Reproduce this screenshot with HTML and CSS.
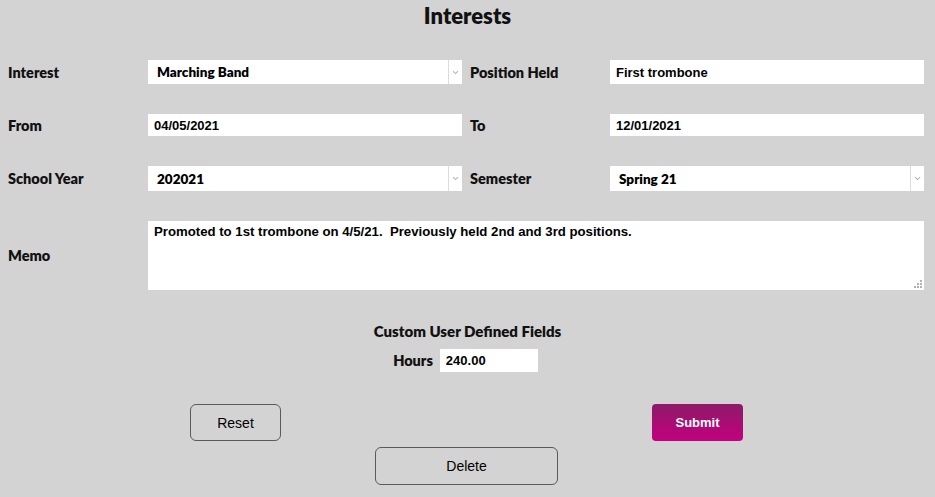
FILE: index.html
```html
<!DOCTYPE html>
<html>
<head>
<meta charset="utf-8">
<link rel="stylesheet" href="styles.css">
</head>
<body>
<h1 class="title">Interests</h1>
<div class="form">
  <label class="lbl">Interest</label>
  <div class="select"><span class="sel-val">Marching Band</span><span class="sel-arrow"><svg width="7" height="5" viewBox="0 0 7 5"><path d="M1 1.2 L3.5 3.6 L6 1.2" fill="none" stroke="#b4b4b4" stroke-width="1.1"/></svg></span></div>
  <label class="lbl lbl-r">Position Held</label>
  <input class="inp" type="text" value="First trombone">

  <label class="lbl">From</label>
  <input class="inp" type="text" value="04/05/2021">
  <label class="lbl lbl-r">To</label>
  <input class="inp" type="text" value="12/01/2021">

  <label class="lbl">School Year</label>
  <div class="select"><span class="sel-val">202021</span><span class="sel-arrow"><svg width="7" height="5" viewBox="0 0 7 5"><path d="M1 1.2 L3.5 3.6 L6 1.2" fill="none" stroke="#b4b4b4" stroke-width="1.1"/></svg></span></div>
  <label class="lbl lbl-r">Semester</label>
  <div class="select"><span class="sel-val">Spring 21</span><span class="sel-arrow"><svg width="7" height="5" viewBox="0 0 7 5"><path d="M1 1.2 L3.5 3.6 L6 1.2" fill="none" stroke="#b4b4b4" stroke-width="1.1"/></svg></span></div>

  <label class="lbl">Memo</label>
  <div class="memo-wrap">
    <textarea class="memo">Promoted to 1st trombone on 4/5/21.  Previously held 2nd and 3rd positions.</textarea>
    <span class="grip"><svg width="8" height="8" viewBox="0 0 8 8" fill="#b0b0b0"><rect x="6" y="0" width="2" height="2"/><rect x="3" y="3" width="2" height="2"/><rect x="6" y="3" width="2" height="2"/><rect x="0" y="6" width="2" height="2"/><rect x="3" y="6" width="2" height="2"/><rect x="6" y="6" width="2" height="2"/></svg></span>
  </div>
</div>

<div class="custom">
  <div class="custom-title">Custom User Defined Fields</div>
  <div class="hours-row">
    <label class="hours-lbl">Hours</label>
    <input class="inp hours-inp" type="text" value="240.00">
  </div>
</div>

<div class="actions">
  <button class="btn btn-reset">Reset</button>
  <button class="btn btn-submit">Submit</button>
</div>
<div class="actions-2">
  <button class="btn btn-delete">Delete</button>
</div>
</body>
</html>
```

FILE: styles.css
```css
html, body {
  margin: 0;
  padding: 0;
}
body {
  background: #d3d3d3;
  width: 935px;
  height: 497px;
  overflow: hidden;
  font-family: "Lato", "DejaVu Sans", sans-serif;
  color: #111;
}
.title {
  margin: 0;
  height: 32px;
  line-height: 32px;
  text-align: center;
  font-size: 22px;
  font-weight: 800;
  color: #111;
}
.form {
  margin-top: 28px;
  padding-left: 8px;
  display: grid;
  grid-template-columns: 140px 314px 148px 314px;
  grid-template-rows: 24px 22px 25px 69px;
  row-gap: 30px;
  align-items: center;
}
.lbl {
  font-size: 14.5px;
  font-weight: 800;
}
.lbl-r {
  padding-left: 8px;
}
.inp {
  box-sizing: border-box;
  height: 100%;
  width: 100%;
  margin: 0;
  border: none;
  outline: none;
  background: #fff;
  padding: 0 6px;
  font-family: "Liberation Sans", Arial, sans-serif;
  font-weight: 700;
  font-size: 13px;
  color: #000;
}
.select {
  height: 100%;
  background: #fff;
  display: flex;
  align-items: center;
}
.sel-val {
  flex: 1;
  padding-left: 9px;
  font-size: 13.5px;
  font-weight: 800;
  color: #000;
}
.sel-arrow {
  width: 13px;
  height: 100%;
  border-left: 1px solid #dcdcdc;
  display: flex;
  align-items: center;
  justify-content: center;
}
.memo-wrap {
  grid-column: 2 / 5;
  height: 69px;
  position: relative;
}
.memo {
  box-sizing: border-box;
  width: 100%;
  height: 100%;
  margin: 0;
  border: none;
  outline: none;
  resize: none;
  background: #fff;
  padding: 3px 6px;
  font-family: "Liberation Sans", Arial, sans-serif;
  font-weight: 700;
  font-size: 13.2px;
  line-height: 15px;
  color: #000;
  display: block;
}
.grip {
  position: absolute;
  right: 2px;
  bottom: 2px;
  width: 8px;
  height: 8px;
  line-height: 0;
}
.custom {
  margin-top: 32px;
  display: flex;
  flex-direction: column;
  align-items: center;
}
.custom-title {
  font-size: 15px;
  font-weight: 800;
  line-height: 18px;
}
.hours-row {
  margin-top: 9px;
  padding-right: 4px;
  display: flex;
  align-items: center;
  gap: 7px;
  height: 23px;
}
.hours-lbl {
  font-size: 14.5px;
  font-weight: 800;
}
.hours-inp {
  width: 98px;
  height: 23px;
}
.actions {
  margin-top: 32px;
  padding-left: 190px;
  display: flex;
  gap: 371px;
}
.btn {
  box-sizing: border-box;
  margin: 0;
  font-family: "Liberation Sans", Arial, sans-serif;
  font-size: 14px;
  color: #000;
  cursor: pointer;
}
.btn-reset {
  width: 91px;
  height: 37px;
  background: transparent;
  border: 1px solid #5a5a5a;
  border-radius: 6px;
}
.btn-submit {
  width: 91px;
  height: 37px;
  border: none;
  border-radius: 4px;
  background: linear-gradient(#8c1b68, #c3007f);
  color: #fff;
  font-weight: 700;
  font-size: 13px;
}
.actions-2 {
  margin-top: 6px;
  padding-left: 375px;
  display: flex;
}
.btn-delete {
  width: 183px;
  height: 38px;
  background: transparent;
  border: 1px solid #5a5a5a;
  border-radius: 6px;
}
```
